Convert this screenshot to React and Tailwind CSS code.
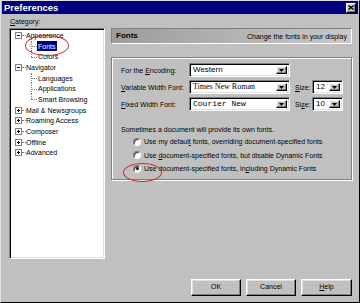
import React from 'react';

const sans = { fontFamily: '"Liberation Sans", Arial, sans-serif' };

const raised =
  'border border-t-white border-l-white border-r-black border-b-black shadow-[inset_-1px_-1px_0_#808080,inset_1px_1px_0_#dfdfdf]';
const sunken =
  'border border-t-[#808080] border-l-[#808080] border-r-white border-b-white shadow-[inset_1px_1px_0_#000,inset_-1px_-1px_0_#dfdfdf]';

const tree = [
  { label: 'Appearance', open: true, children: ['Fonts', 'Colors'] },
  { label: 'Navigator', open: true, children: ['Languages', 'Applications', 'Smart Browsing'] },
  { label: 'Mail & Newsgroups' },
  { label: 'Roaming Access' },
  { label: 'Composer' },
  { label: 'Offline' },
  { label: 'Advanced' },
];

function Expander({ open }) {
  return (
    <span className="relative w-[7px] h-[7px] border border-[#808080] bg-white flex items-center justify-center shrink-0">
      <span className="absolute w-[3px] h-px bg-black" />
      {!open && <span className="absolute w-px h-[3px] bg-black" />}
    </span>
  );
}

function TreeParent({ label, open }) {
  return (
    <div className="h-[10.7px] flex items-center pl-[3px]">
      <Expander open={open} />
      <span className="w-[4px] border-t border-dotted border-[#808080]" />
      <span className="text-[7px] leading-none text-black">{label}</span>
    </div>
  );
}

function TreeChild({ label, last, selected }) {
  return (
    <div className="h-[10.7px] flex items-center">
      <span className="w-[19px] shrink-0" />
      <span className="relative w-[6px] h-full shrink-0">
        <span
          className={`absolute left-0 top-0 border-l border-dotted border-[#808080] ${last ? 'h-1/2' : 'h-full'}`}
        />
        <span className="absolute left-0 top-1/2 w-[6px] border-t border-dotted border-[#808080]" />
      </span>
      <span
        className={`text-[7px] leading-none px-px py-[1.5px] ${selected ? 'bg-[#000080] text-white' : 'text-black'}`}
      >
        {label}
      </span>
    </div>
  );
}

function DropButton() {
  return (
    <span className={`w-[11px] h-full bg-[#c0c0c0] flex items-center justify-center shrink-0 ${raised}`}>
      <svg width="5" height="3" viewBox="0 0 5 3">
        <path d="M0 0h5L2.5 3z" fill="#000" />
      </svg>
    </span>
  );
}

function Select({ width, children, font }) {
  return (
    <div className={`h-[14px] ${width} bg-white flex items-stretch p-[2px] ${sunken}`}>
      <span className={`flex-1 flex items-center pl-[1px] text-[8px] leading-none text-black ${font}`}>
        {children}
      </span>
      <DropButton />
    </div>
  );
}

function Radio({ checked, children }) {
  return (
    <div className="flex items-center h-[13.5px] pl-[12px]">
      <span className="w-[8px] h-[8px] rounded-full bg-white border border-t-[#808080] border-l-[#808080] border-r-white border-b-white shadow-[inset_1px_1px_0_#404040] flex items-center justify-center shrink-0">
        {checked && <span className="w-[3px] h-[3px] rounded-full bg-black" />}
      </span>
      <span className="ml-[3px] text-[7px] leading-none text-black">{children}</span>
    </div>
  );
}

function Button({ children, width }) {
  return (
    <div className={`${width} h-[17px] bg-[#c0c0c0] flex items-center justify-center text-[7px] text-black ${raised}`}>
      {children}
    </div>
  );
}

export default function App() {
  return (
    <div
      style={sans}
      className="relative w-[360px] h-[303px] bg-[#c0c0c0] flex flex-col border border-t-[#dfdfdf] border-l-[#dfdfdf] border-r-black border-b-black overflow-hidden"
    >
      <div className="h-[13px] mx-px bg-[#000080] flex items-center justify-between pl-[2px] pr-[2px]">
        <span className="text-white font-bold text-[9.5px] leading-none">Preferences</span>
        <span className={`w-[10px] h-[10px] bg-[#c0c0c0] flex items-center justify-center ${raised}`}>
          <svg width="6" height="5" viewBox="0 0 6 5">
            <path d="M0.5 0.5L5.5 4.5M5.5 0.5L0.5 4.5" stroke="#000" strokeWidth="1.3" />
          </svg>
        </span>
      </div>

      <div className="flex items-start pl-[8px]">
        <div className="w-[96px] flex flex-col">
          <div className="h-[14px] flex items-center pl-px text-[7px] leading-none text-black">
            <span>
              <span className="underline">C</span>ategory:
            </span>
          </div>
          <div className={`h-[231px] bg-white pt-[1px] px-[2px] ${sunken}`}>
            {tree.map((n) => (
              <div key={n.label}>
                <TreeParent label={n.label} open={n.open} />
                {n.children &&
                  n.children.map((c, i) => (
                    <TreeChild
                      key={c}
                      label={c}
                      last={i === n.children.length - 1}
                      selected={c === 'Fonts'}
                    />
                  ))}
              </div>
            ))}
          </div>
        </div>

        <div className="ml-[6px] w-[241px] pt-[14px] flex flex-col">
          <div className="h-[16px] flex items-center justify-between px-[4px] bg-gradient-to-r from-[#9c9c9c] to-[#c8c8c8] border border-t-[#808080] border-l-[#808080] border-r-white border-b-white">
            <span className="font-bold text-[8px] leading-none text-black">Fonts</span>
            <span className="text-[7px] leading-none text-black">Change the fonts in your display</span>
          </div>

          <div className="mt-[13px] h-[123px] border border-[#808080] shadow-[1px_1px_0_#fff,inset_1px_1px_0_#fff] pt-[5px] pl-[9px] flex flex-col">
            <div className="flex items-center h-[14px]">
              <span className="w-[68px] text-[7px] leading-none text-black">
                For the <span className="underline">E</span>ncoding:
              </span>
              <Select width="w-[101px]" font="">
                Western
              </Select>
            </div>
            <div className="flex items-center h-[14px] mt-[3px]">
              <span className="w-[68px] text-[7px] leading-none text-black">
                <span className="underline">V</span>ariable Width Font:
              </span>
              <Select width="w-[101px]" font="font-['Liberation_Serif',serif]">
                Times New Roman
              </Select>
              <span className="ml-[5px] w-[17px] text-[7px] leading-none text-black">
                <span className="underline">S</span>ize:
              </span>
              <Select width="w-[31px]" font="">
                12
              </Select>
            </div>
            <div className="flex items-center h-[14px] mt-[3px]">
              <span className="w-[68px] text-[7px] leading-none text-black">
                <span className="underline">F</span>ixed Width Font:
              </span>
              <Select width="w-[101px]" font="font-['Liberation_Mono',monospace]">
                Courier New
              </Select>
              <span className="ml-[5px] w-[17px] text-[7px] leading-none text-black">
                Si<span className="underline">z</span>e:
              </span>
              <Select width="w-[31px]" font="">
                10
              </Select>
            </div>
            <div className="mt-[13px] h-[10px] flex items-center text-[7px] leading-none text-black">
              Sometimes a document will provide its own fonts.
            </div>
            <div className="mt-[1px]">
              <Radio>
                Use my defaul<span className="underline">t</span> fonts, overriding document-specified fonts
              </Radio>
              <Radio>
                Use <span className="underline">d</span>ocument-specified fonts, but disable Dynamic Fonts
              </Radio>
              <Radio checked>
                Use document-specified fonts, in<span className="underline">c</span>luding Dynamic Fonts
              </Radio>
            </div>
          </div>
        </div>
      </div>

      <div className="mt-auto flex justify-end gap-[5px] pr-[7px] pb-[6px]">
        <Button width="w-[50px]">OK</Button>
        <Button width="w-[50px]">Cancel</Button>
        <Button width="w-[51px]">
          <span>
            <span className="underline">H</span>elp
          </span>
        </Button>
      </div>

      <span className="absolute left-[24px] top-[34px] w-[44px] h-[21px] rounded-[50%] border-[1.5px] border-[#d42a2a]" />
      <span className="absolute left-[122px] top-[162px] w-[39px] h-[19px] rounded-[50%] border-[1.5px] border-[#d42a2a]" />
    </div>
  );
}
